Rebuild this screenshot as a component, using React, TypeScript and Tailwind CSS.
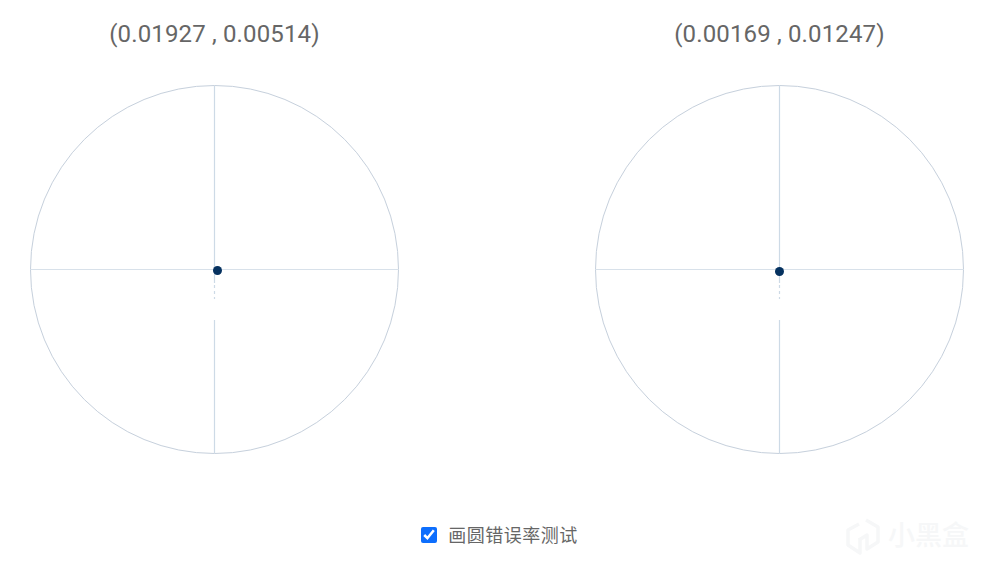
function Target({ dotX, dotY }: { dotX: number; dotY: number }) {
  return (
    <svg className="block" width="371" height="371" viewBox="0 0 371 371" fill="none">
      <circle cx="185.5" cy="185.5" r="184" stroke="#c6d0dc" strokeWidth="1" />
      <path d="M1.5 185.5H369.5" stroke="#d8e1ea" strokeWidth="1.2" />
      <path d="M185.5 1.5V199M185.5 236V369.5" stroke="#cddae6" strokeWidth="1.2" />
      <path d="M185.5 201V215" stroke="#cddae6" strokeWidth="1.2" strokeDasharray="3 3" />
      <circle cx={dotX} cy={dotY} r="4.5" fill="#05315f" />
    </svg>
  );
}

function Panel({ label, dotX, dotY }: { label: string; dotX: number; dotY: number }) {
  return (
    <div className="flex flex-col items-center w-[371px]">
      <div className="h-[84px] pt-[17px] text-[24px] leading-[34px] tracking-[0.15px] text-[#666666] whitespace-nowrap">{label}</div>
      <Target dotX={dotX} dotY={dotY} />
    </div>
  );
}

export default function App() {
  return (
    <div className="relative w-[996px] h-[572px] overflow-hidden bg-white font-['Roboto','Noto_Sans_CJK_SC',sans-serif]">
      <div className="flex gap-[194px] pl-[29px]">
        <Panel label="(0.01927 , 0.00514)" dotX={188.5} dotY={186.5} />
        <Panel label="(0.00169 , 0.01247)" dotX={185.5} dotY={187.5} />
      </div>
      <label className="flex items-center justify-center gap-[11px] mt-[68px] pl-[3px]">
        <input type="checkbox" defaultChecked className="w-4 h-4 m-0 mb-[2px] accent-[#0d6efd]" />
        <span className="text-[18px] leading-[26px] tracking-[0.5px] text-[#666666]">画圆错误率测试</span>
      </label>
      <div className="absolute left-[845px] top-[518px] flex items-center gap-[7px] text-[#f6f7f8]">
        <svg width="36" height="37" viewBox="0 0 36 37" fill="none" stroke="currentColor" strokeWidth="3.5" strokeLinejoin="round">
          <path d="M14 6 3 12v15l12 8V20" />
          <path d="M21 2l12 7v15l-11 7V17l-8 5" />
        </svg>
        <span className="text-[27px] leading-[37px] font-medium">小黑盒</span>
      </div>
    </div>
  );
}
